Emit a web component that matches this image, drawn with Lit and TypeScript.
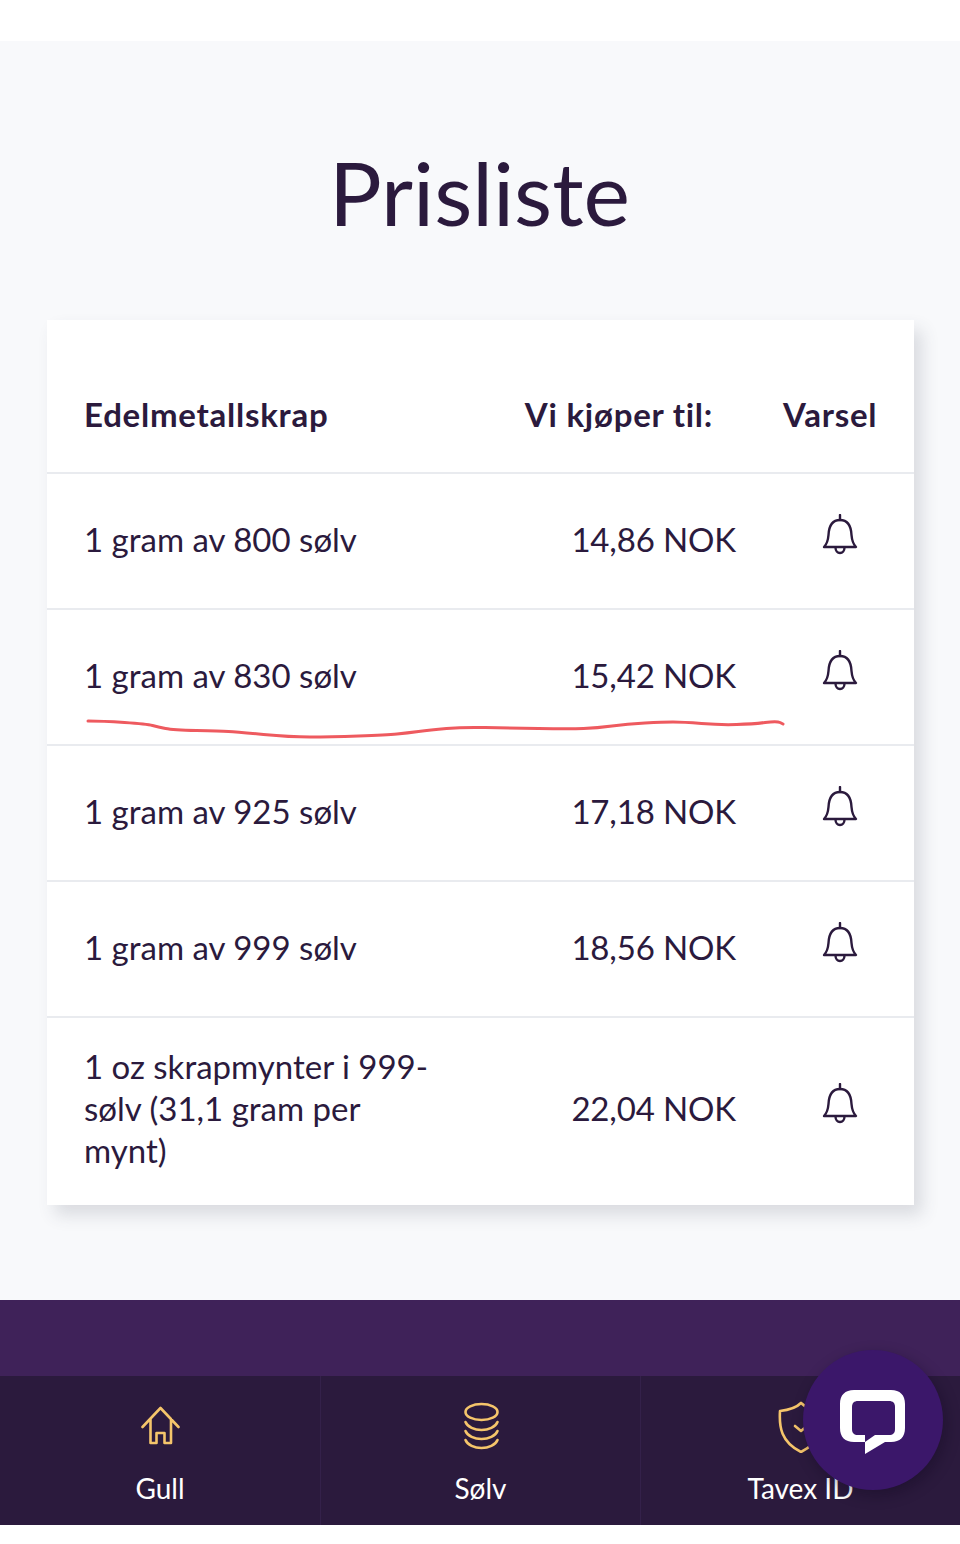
import { LitElement, html, css } from "lit";
import { customElement } from "lit/decorators.js";

const bell = html`<svg class="bell" viewBox="0 0 36 42" fill="none" stroke="#2b1a3d" stroke-width="2.4" stroke-linecap="round" stroke-linejoin="round">
  <path d="M18 1v5"/>
  <path d="M2 33c3-3 4-6 4.500-12C7 11 11 6 18 6s11 5 11.500 15C30 27 31 30 34 33z"/>
  <path d="M13.500 33.500c0 3 2 5.500 4.500 5.500s4.500-2.500 4.500-5.500"/>
</svg>`;

const rows = [
  ["1 gram av 800 sølv", "14,86 NOK"],
  ["1 gram av 830 sølv", "15,42 NOK"],
  ["1 gram av 925 sølv", "17,18 NOK"],
  ["1 gram av 999 sølv", "18,56 NOK"],
  ["1 oz skrapmynter i 999-sølv (31,1 gram per mynt)", "22,04 NOK"],
];

const scribble: [number, number][] = [
  [88, 721], [102, 721], [147, 724], [158, 727], [173, 730], [220, 731], [237, 732],
  [290, 737], [330, 737], [387, 735], [407, 733], [430, 730], [463, 727], [507, 728],
  [570, 729], [597, 728], [627, 724], [663, 722], [683, 722], [720, 725], [753, 724],
  [777, 721], [783, 724],
];

function smooth(points: [number, number][]): string {
  let d = `M${points[0][0]} ${points[0][1]}`;
  for (let i = 1; i < points.length - 1; i++) {
    const mx = (points[i][0] + points[i + 1][0]) / 2;
    const my = (points[i][1] + points[i + 1][1]) / 2;
    d += `Q${points[i][0]} ${points[i][1]} ${mx} ${my}`;
  }
  const last = points[points.length - 1];
  return d + `L${last[0]} ${last[1]}`;
}

@customElement("app-root")
export class AppRoot extends LitElement {
  static styles = css`
    :host {
      display: block;
      position: relative;
      height: 1544px;
      background: #fff;
      overflow: hidden;
      font-family: Lato, "Noto Sans", sans-serif;
      color: #2b1a3d;
    }
    .main {
      margin-top: 41px;
      background: #f8f9fb;
      padding: 0 46px 95px 47px;
    }
    h1 {
      margin: 0;
      height: 279px;
      box-sizing: border-box;
      padding-top: 96px;
      padding-right: 2px;
      font-size: 88px;
      line-height: 110px;
      font-weight: 400;
      text-align: center;
    }
    .card {
      background: #fff;
      box-shadow: 8px 10px 16px rgba(60, 70, 85, 0.16);
    }
    .head {
      display: grid;
      grid-template-columns: 1fr auto 92px;
      column-gap: 70px;
      height: 154px;
      box-sizing: border-box;
      padding: 63px 39px 0 37px;
      border-bottom: 2px solid #e9ebef;
      font-size: 33px;
      line-height: 62px;
      font-weight: 700;
      letter-spacing: 0.75px;
    }
    .head span:last-child {
      text-align: right;
    }
    .row {
      display: grid;
      grid-template-columns: 350px 1fr 72px;
      column-gap: 68px;
      align-items: center;
      min-height: 136px;
      box-sizing: border-box;
      padding: 0 38px 4px 37px;
      border-bottom: 2px solid #e9ebef;
      font-size: 33px;
      line-height: 42px;
    }
    .row:last-child {
      border-bottom: 0;
      min-height: 187px;
      padding-bottom: 7px;
    }
    .price {
      text-align: right;
      letter-spacing: -0.15px;
    }
    .bell {
      display: block;
      width: 36px;
      height: 42px;
      margin: 0 auto 8px;
    }
    .band {
      height: 76px;
      background: #3f2259;
    }
    nav {
      display: grid;
      grid-template-columns: repeat(3, 1fr);
      height: 149px;
      background: #2b1a3d;
    }
    .tab {
      display: flex;
      flex-direction: column;
      align-items: center;
      color: #fff;
      font-size: 28px;
      line-height: 36px;
      border-left: 1px solid #34214a;
    }
    .tab:first-child {
      border-left: 0;
    }
    .icon {
      display: block;
      height: 52px;
      margin-top: 25px;
      margin-bottom: 17px;
      fill: none;
      stroke: #f5c56b;
      stroke-width: 2.6;
      stroke-linecap: round;
      stroke-linejoin: round;
    }
    .home { width: 39px; }
    .coins { width: 40px; }
    .shield { width: 50px; }
    .red {
      position: absolute;
      left: 80px;
      top: 710px;
      width: 710px;
      height: 34px;
      fill: none;
      stroke: #ee5a5f;
      stroke-width: 3;
      stroke-linecap: round;
      stroke-linejoin: round;
    }
    .chat {
      position: absolute;
      left: 803px;
      top: 1350px;
      width: 140px;
      height: 140px;
      border-radius: 50%;
      background: #3b176a;
      box-shadow: 3px 5px 14px rgba(15, 5, 30, 0.35);
    }
    .chat svg {
      display: block;
      width: 140px;
      height: 140px;
    }
  `;

  render() {
    return html`
      <div class="main">
        <h1>Prisliste</h1>
        <div class="card">
          <div class="head">
            <span>Edelmetallskrap</span>
            <span>Vi kjøper til:</span>
            <span>Varsel</span>
          </div>
          ${rows.map(
            ([name, price]) => html`<div class="row">
              <span>${name}</span>
              <span class="price">${price}</span>
              ${bell}
            </div>`
          )}
        </div>
      </div>
      <div class="band"></div>
      <nav>
        <div class="tab">
          <svg class="icon home" viewBox="0 0 39 52">
            <path d="M1.500 26 19.500 7 37.500 26M9.500 18V42h6V32h8v10h6.500V18" />
          </svg>
          Gull
        </div>
        <div class="tab">
          <svg class="icon coins" viewBox="0 0 40 52">
            <ellipse cx="20.500" cy="11" rx="16" ry="8" />
            <path d="M4.500 21c2 5 9 8 16 8s14-3 16-8M4.500 30c2 5 9 8 16 8s14-3 16-8M4.500 39c2 5 9 8 16 8s14-3 16-8" />
          </svg>
          Sølv
        </div>
        <div class="tab">
          <svg class="icon shield" viewBox="0 0 50 52">
            <path d="M25 2C20 7 13 9 4 10c-1 16 1 31 21 41 20-10 22-25 21-41C37 9 30 7 25 2z" />
            <path d="M19 25l6 5 7-6" />
          </svg>
          Tavex ID
        </div>
      </nav>
      <svg class="red" viewBox="80 710 710 34">
        <path d="${smooth(scribble)}" />
      </svg>
      <div class="chat">
        <svg viewBox="0 0 140 140">
          <path fill="#fff" fill-rule="evenodd" d="M51 40h37c9 0 14 5 14 14v24c0 9-5 14-14 14h-6L62 104V92H51c-9 0-14-5-14-14V54c0-9 5-14 14-14zM55 51c-4 0-6 2-6 6v22c0 4 2 6 6 6h7v7l10-7h14c4 0 6-2 6-6V57c0-4-2-6-6-6z" />
        </svg>
      </div>
    `;
  }
}
